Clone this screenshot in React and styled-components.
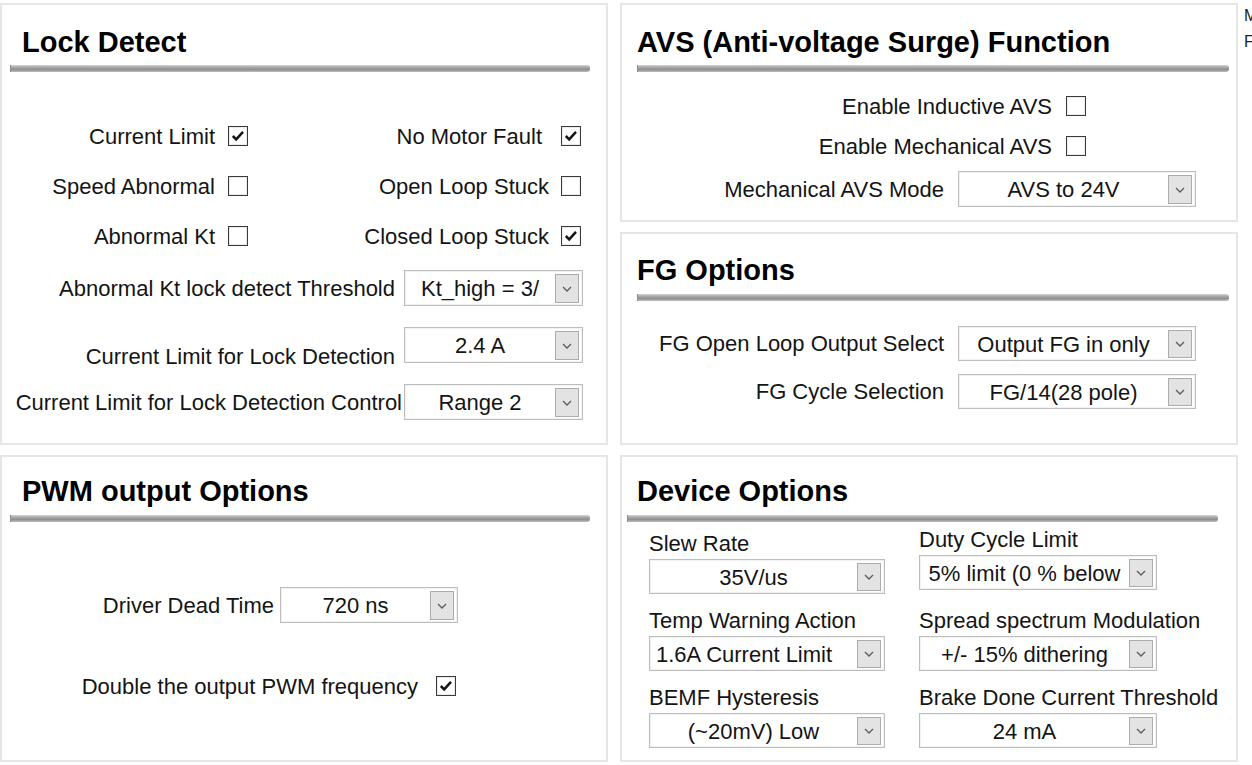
import React from 'react';
import styled, { createGlobalStyle } from 'styled-components';

const GlobalStyle = createGlobalStyle`
  html, body {
    margin: 0;
    padding: 0;
    background: #fff;
    overflow: hidden;
  }
  body {
    font-family: "Liberation Sans", Arial, sans-serif;
    color: #141414;
  }
  * {
    box-sizing: border-box;
  }
`;

const Page = styled.div`
  display: flex;
  align-items: flex-start;
  padding-top: 3px;
  width: 1252px;
  height: 765px;
  overflow: hidden;
`;

const Column = styled.div`
  width: ${p => p.$w}px;
  margin-left: ${p => p.$ml || 0}px;
  flex: none;
  display: flex;
  flex-direction: column;
  gap: 10px;
`;

const SideNote = styled.div`
  margin-left: 6px;
  flex: none;
  font-size: 16px;
  line-height: 26px;
  color: #222;
  white-space: nowrap;
`;

const Panel = styled.section`
  height: ${p => p.$h}px;
  border: 2px solid #e6e6e6;
  background: #fff;
  display: flex;
  flex-direction: column;
`;

const Heading = styled.h2`
  margin: 0;
  padding: ${p => p.$top}px 0 0 ${p => p.$left}px;
  font-size: 29px;
  line-height: 34px;
  font-weight: 700;
  color: #000;
  white-space: nowrap;
`;

const Rule = styled.div`
  height: 7px;
  margin: ${p => p.$gap}px ${p => p.$right}px 0 ${p => p.$left}px;
  background: linear-gradient(to bottom, #d6d6d6 0%, #ababab 30%, #909090 65%, #bdbdbd 100%);
  border-left: 1px solid #8a8a8a;
  border-radius: 0 3px 3px 0;
`;

const Label = styled.span`
  font-size: 22px;
  line-height: 25px;
  white-space: nowrap;
  color: #141414;
  align-self: ${p => (p.$low ? 'flex-end' : 'auto')};
  margin-bottom: ${p => (p.$low ? -6 : 0)}px;
`;

const CheckGrid = styled.div`
  display: grid;
  grid-template-columns: ${p => p.$cols};
  grid-auto-rows: 50px;
  margin-top: ${p => p.$top}px;
`;

const CheckItem = styled.div`
  display: flex;
  justify-content: flex-end;
  align-items: center;
  gap: ${p => p.$gap}px;
`;

const FieldRow = styled.div`
  display: flex;
  justify-content: flex-end;
  align-items: center;
  gap: ${p => p.$gap}px;
  height: ${p => p.$h || 36}px;
  margin-top: ${p => p.$top}px;
  padding-right: ${p => p.$right}px;
`;

const Box = styled.span`
  width: 20px;
  height: 20px;
  flex: none;
  border: 1px solid #3a3a3a;
  background: #fff;
  box-shadow: inset 0 0 0 1px #ececec;
  display: inline-flex;
  align-items: center;
  justify-content: center;
`;

const SelectBox = styled.div`
  width: ${p => p.$w}px;
  height: ${p => p.$h || 36}px;
  flex: none;
  display: flex;
  align-items: stretch;
  padding: 3px 3px 2px 0;
  border: 1px solid #bdbdbd;
  box-shadow: inset 0 0 0 1px #f2f2f2;
  background: #fff;
`;

const SelectValue = styled.span`
  flex: 1;
  min-width: 0;
  overflow: hidden;
  white-space: nowrap;
  display: flex;
  justify-content: ${p => (p.$align === 'left' ? 'flex-start' : 'safe center')};
  align-items: ${p => (p.$valign === 'top' ? 'flex-start' : 'center')};
  padding: ${p => (p.$valign === 'top' ? '2px 6px 0' : '0 6px')};
  font-size: 22px;
  line-height: 25px;
  color: #141414;
`;

const ArrowButton = styled.span`
  width: 24px;
  flex: none;
  background: #e3e3e3;
  border: 1px solid #acacac;
  display: flex;
  align-items: center;
  justify-content: center;
`;

const DeviceGrid = styled.div`
  display: grid;
  grid-template-columns: 236px 238px;
  column-gap: 34px;
  row-gap: 14px;
  margin-top: 9px;
  padding-left: 27px;
`;

const DeviceCell = styled.div`
  display: flex;
  flex-direction: column;
  gap: 3px;
  margin-top: ${p => p.$raise ? -p.$raise : 0}px;
`;

const Check = ({ on }) => (
  <Box>
    {on && (
      <svg width="18" height="18" viewBox="0 0 18 18">
        <path d="M3.8 9 L7.2 12.4 L14 4.8" fill="none" stroke="#151515" strokeWidth="2.5" />
      </svg>
    )}
  </Box>
);

const Select = ({ value, w, h, align, valign }) => (
  <SelectBox $w={w} $h={h}>
    <SelectValue $align={align} $valign={valign}>{value}</SelectValue>
    <ArrowButton>
      <svg width="10" height="6" viewBox="0 0 10 6">
        <path d="M1 1 L5 5 L9 1" fill="none" stroke="#5c5c5c" strokeWidth="1.3" />
      </svg>
    </ArrowButton>
  </SelectBox>
);

const LockDetect = () => (
  <Panel $h={442}>
    <Heading $top={20} $left={20}>Lock Detect</Heading>
    <Rule $gap={6} $left={8} $right={16} />
    <CheckGrid $cols="246px 333px" $top={39}>
      <CheckItem $gap={13}><Label>Current Limit</Label><Check on /></CheckItem>
      <CheckItem $gap={19}><Label>No Motor Fault</Label><Check on /></CheckItem>
      <CheckItem $gap={13}><Label>Speed Abnormal</Label><Check /></CheckItem>
      <CheckItem $gap={12}><Label>Open Loop Stuck</Label><Check /></CheckItem>
      <CheckItem $gap={13}><Label>Abnormal Kt</Label><Check /></CheckItem>
      <CheckItem $gap={12}><Label>Closed Loop Stuck</Label><Check on /></CheckItem>
    </CheckGrid>
    <FieldRow $gap={9} $top={9} $right={23}>
      <Label>Abnormal Kt lock detect Threshold</Label>
      <Select value="Kt_high = 3/" w={179} />
    </FieldRow>
    <FieldRow $gap={9} $top={21} $right={23}>
      <Label $low>Current Limit for Lock Detection</Label>
      <Select value="2.4 A" w={179} valign="top" />
    </FieldRow>
    <FieldRow $gap={2} $top={21} $right={23}>
      <Label>Current Limit for Lock Detection Control</Label>
      <Select value="Range 2" w={179} />
    </FieldRow>
  </Panel>
);

const PwmOptions = () => (
  <Panel $h={307}>
    <Heading $top={17} $left={20}>PWM output Options</Heading>
    <Rule $gap={7} $left={8} $right={16} />
    <FieldRow $gap={6} $top={65} $right={148}>
      <Label>Driver Dead Time</Label>
      <Select value="720 ns" w={178} />
    </FieldRow>
    <FieldRow $gap={18} $top={48} $right={150} $h={30}>
      <Label>Double the output PWM frequency</Label>
      <Check on />
    </FieldRow>
  </Panel>
);

const AvsFunction = () => (
  <Panel $h={219}>
    <Heading $top={20} $left={15}>AVS (Anti-voltage Surge) Function</Heading>
    <Rule $gap={6} $left={15} $right={7} />
    <FieldRow $gap={14} $top={19} $right={150} $h={30}>
      <Label>Enable Inductive AVS</Label>
      <Check />
    </FieldRow>
    <FieldRow $gap={14} $top={10} $right={150} $h={30}>
      <Label>Enable Mechanical AVS</Label>
      <Check />
    </FieldRow>
    <FieldRow $gap={14} $top={10} $right={40}>
      <Label>Mechanical AVS Mode</Label>
      <Select value="AVS to 24V" w={238} />
    </FieldRow>
  </Panel>
);

const FgOptions = () => (
  <Panel $h={213}>
    <Heading $top={19} $left={15}>FG Options</Heading>
    <Rule $gap={7} $left={15} $right={7} />
    <FieldRow $gap={14} $top={25} $right={40} $h={35}>
      <Label>FG Open Loop Output Select</Label>
      <Select value="Output FG in only" w={238} h={35} />
    </FieldRow>
    <FieldRow $gap={14} $top={13} $right={40} $h={35}>
      <Label>FG Cycle Selection</Label>
      <Select value="FG/14(28 pole)" w={238} h={35} />
    </FieldRow>
  </Panel>
);

const deviceFields = [
  { label: 'Slew Rate', value: '35V/us', w: 236 },
  { label: 'Duty Cycle Limit', value: '5% limit (0 % below', w: 238, raise: 4 },
  { label: 'Temp Warning Action', value: '1.6A Current Limit', w: 236, align: 'left' },
  { label: 'Spread spectrum Modulation', value: '+/- 15% dithering', w: 238 },
  { label: 'BEMF Hysteresis', value: '(~20mV) Low', w: 236 },
  { label: 'Brake Done Current Threshold', value: '24 mA', w: 238 },
];

const DeviceOptions = () => (
  <Panel $h={307}>
    <Heading $top={17} $left={15}>Device Options</Heading>
    <Rule $gap={7} $left={5} $right={18} />
    <DeviceGrid>
      {deviceFields.map(f => (
        <DeviceCell key={f.label} $raise={f.raise}>
          <Label>{f.label}</Label>
          <Select value={f.value} w={f.w} h={35} align={f.align} />
        </DeviceCell>
      ))}
    </DeviceGrid>
  </Panel>
);

export default function App() {
  return (
    <>
      <GlobalStyle />
      <Page>
        <Column $w={608}>
          <LockDetect />
          <PwmOptions />
        </Column>
        <Column $w={618} $ml={12}>
          <AvsFunction />
          <FgOptions />
          <DeviceOptions />
        </Column>
        <SideNote>
          <div>Motor</div>
          <div>Fault</div>
        </SideNote>
      </Page>
    </>
  );
}
